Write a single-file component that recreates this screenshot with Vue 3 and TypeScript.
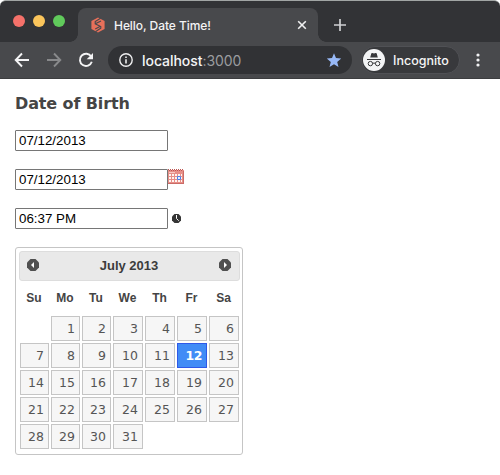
<script setup lang="ts">
interface Day {
  key: number
  label: number | null
}

const weekdays: string[] = ['Su', 'Mo', 'Tu', 'We', 'Th', 'Fr', 'Sa']
const selected = 12
const firstWeekday = 1
const daysInMonth = 31

const days: Day[] = Array.from({ length: firstWeekday + daysInMonth }, (_, i) => ({
  key: i,
  label: i < firstWeekday ? null : i - firstWeekday + 1,
}))
</script>

<template>
  <div class="window">
    <header class="chrome">
      <div class="tabstrip">
        <div class="lights">
          <span class="light red"></span>
          <span class="light yellow"></span>
          <span class="light green"></span>
        </div>
        <div class="tab">
          <svg class="favicon" width="14" height="16" viewBox="0 0 14 16">
            <path d="M7 .4 13.6 4v8L7 15.6.4 12V4z" fill="#e8705a" />
            <path d="M9.6 1.2 4.2 4.6v2.2l5.6 2.7v1.7L4.4 14.8M4.8 6.6 10 3.9M4.2 12 9.4 9.2" fill="none" stroke="#48494c" stroke-width="1.1" />
          </svg>
          <span class="title">Hello, Date Time!</span>
          <svg class="close" width="10" height="10" viewBox="0 0 10 10">
            <path d="M1.2 1.2l7.6 7.6M8.8 1.2 1.2 8.8" stroke="#f1f1f2" stroke-width="1.6" />
          </svg>
        </div>
        <svg class="plus" width="12" height="12" viewBox="0 0 12 12">
          <path d="M6 0v12M0 6h12" stroke="#d0d1d3" stroke-width="1.7" />
        </svg>
      </div>
      <div class="toolbar">
        <svg class="back" width="16" height="16" viewBox="0 0 16 16">
          <path d="M15 8H2M8 1.5 1.7 8 8 14.5" fill="none" stroke="#f4f4f5" stroke-width="1.9" />
        </svg>
        <svg class="forward" width="16" height="16" viewBox="0 0 16 16">
          <path d="M1 8h13M8 1.5 14.3 8 8 14.5" fill="none" stroke="#88898b" stroke-width="1.9" />
        </svg>
        <svg class="reload" width="16" height="16" viewBox="0 0 16 16">
          <path d="M13.2 4.6A6.1 6.1 0 1 0 13.8 9.8" fill="none" stroke="#f4f4f5" stroke-width="1.9" />
          <path d="M15 1v6.3H8.7z" fill="#f4f4f5" />
        </svg>
        <div class="address">
          <svg width="14" height="14" viewBox="0 0 14 14">
            <circle cx="7" cy="7" r="6.2" fill="none" stroke="#eeeeef" stroke-width="1.4" />
            <path d="M7 6.2v4.2M7 3.4V5" stroke="#eeeeef" stroke-width="1.6" />
          </svg>
          <span class="url">localhost<span class="port">:3000</span></span>
          <svg class="star" width="16" height="15" viewBox="0 0 16 15">
            <path d="m8 .3 2 4.8 5.2.4-4 3.4 1.3 5.1L8 11.3l-4.5 2.7 1.3-5.1-4-3.4L6 5.1z" fill="#98b9f7" />
          </svg>
        </div>
        <div class="incognito">
          <svg width="22" height="22" viewBox="0 0 22 22">
            <circle cx="11" cy="11" r="11" fill="#f3f4f5" />
            <path d="m7.2 8.4 1-3.7c.1-.5.6-.8 1.2-.6l1.6.4 1.6-.4c.6-.2 1.1.1 1.2.6l1 3.7z" fill="#37383b" />
            <path d="M4 10.5h14" stroke="#37383b" stroke-width="1.1" />
            <g fill="none" stroke="#37383b" stroke-width="1">
              <circle cx="7.4" cy="14.6" r="2.2" />
              <circle cx="14.6" cy="14.6" r="2.2" />
              <path d="M9.6 14.4q1.4-.8 2.8 0" />
            </g>
          </svg>
          <span>Incognito</span>
        </div>
        <svg class="menu" width="4" height="14" viewBox="0 0 4 14" fill="#f1f1f2">
          <circle cx="2" cy="2" r="1.6" />
          <circle cx="2" cy="7" r="1.6" />
          <circle cx="2" cy="12" r="1.6" />
        </svg>
      </div>
    </header>

    <main class="page">
      <h1>Date of Birth</h1>
      <div class="field"><input type="text" value="07/12/2013" /></div>
      <div class="field">
        <input type="text" value="07/12/2013" />
        <svg width="16" height="16" viewBox="0 0 16 16">
          <path d="M0 1h16v14H0z" fill="#e78f88" />
          <path d="M0 14h16v1H0zM15 2h1v13h-1z" fill="#cb6b66" />
          <path d="M0 0h1v1H0zM2 0h1v1H2zM4 0h1v1H4zM6 0h1v1H6zM8 0h1v1H8zM10 0h1v1h-1zM12 0h1v1h-1zM14 0h1v1h-1zM1 1h1v1H1zM3 1h1v1H3zM5 1h1v1H5zM7 1h1v1H7zM9 1h1v1H9zM11 1h1v1h-1zM13 1h1v1h-1z" fill="#bd5753" />
          <path d="M1 3h6v1H1z" fill="#f8c9c2" />
          <path d="M1 5h2v2H1zM4 5h2v2H4zM7 5h2v2H7zM10 5h2v2h-2zM13 5h1v2h-1zM1 8h2v2H1zM4 8h2v2H4zM7 8h2v2H7zM13 8h1v2h-1zM1 11h2v2H1zM4 11h2v2H4zM7 11h2v2H7zM10 11h2v2h-2zM13 11h1v2h-1z" fill="#fff4f1" />
          <path d="M9.5 7.5h3v3h-3z" fill="#e8efff" stroke="#4c80e6" />
        </svg>
      </div>
      <div class="field">
        <input type="text" value="06:37 PM" />
        <svg class="clock" width="9" height="9" viewBox="0 0 9 9">
          <path d="M2.5 0h4L9 2.5v4L6.5 9h-4L0 6.5v-4z" fill="#353535" />
          <path d="M4.5 1v3.5L6.7 6.7" fill="none" stroke="#fff" />
        </svg>
      </div>

      <section class="calendar">
        <div class="cal-head">
          <svg width="12" height="12" viewBox="0 0 12 12">
            <path d="M3.5 0h5L12 3.5v5L8.5 12h-5L0 8.5v-5z" fill="#505050" />
            <path d="M7 3v6L4 6z" fill="#fff" />
          </svg>
          <span>July 2013</span>
          <svg width="12" height="12" viewBox="0 0 12 12">
            <path d="M3.5 0h5L12 3.5v5L8.5 12h-5L0 8.5v-5z" fill="#505050" />
            <path d="M5 3v6l3-3z" fill="#fff" />
          </svg>
        </div>
        <div class="grid weekdays">
          <span v-for="name in weekdays" :key="name">{{ name }}</span>
        </div>
        <div class="grid days">
          <span
            v-for="day in days"
            :key="day.key"
            :class="{ day: day.label !== null, active: day.label === selected }"
          >{{ day.label }}</span>
        </div>
      </section>
    </main>
  </div>
</template>

<style>
body {
  background: #fff;
}
</style>

<style scoped>
.window {
  width: 500px;
  height: 475px;
  overflow: hidden;
  box-sizing: border-box;
}
svg {
  display: block;
  flex: none;
}
.chrome {
  height: 79px;
  box-sizing: border-box;
  background: #323336;
  border-top: 1px solid #a1a5a4;
  border-radius: 6px 6px 0 0;
  overflow: hidden;
  font-family: Inter, "Liberation Sans", sans-serif;
  color: #f4f4f5;
}
.tabstrip {
  height: 41px;
  display: flex;
  align-items: flex-start;
}
.lights {
  display: flex;
  gap: 8px;
  padding: 14px 0 0 13px;
  width: 78px;
  flex: none;
  box-sizing: border-box;
}
.light {
  width: 12px;
  height: 12px;
  border-radius: 50%;
  flex: none;
}
.red { background: #f5716a; }
.yellow { background: #fbc55b; }
.green { background: #60ca5b; }
.tab {
  position: relative;
  width: 240px;
  height: 34px;
  margin-top: 7px;
  box-sizing: border-box;
  padding: 0 11px 0 13px;
  display: flex;
  align-items: center;
  background: #48494c;
  border-radius: 8px 8px 0 0;
}
.tab::before,
.tab::after {
  content: "";
  position: absolute;
  bottom: 0;
  width: 8px;
  height: 8px;
}
.tab::before {
  left: -8px;
  background: radial-gradient(circle at 0 0, transparent 7.5px, #48494c 8px);
}
.tab::after {
  right: -8px;
  background: radial-gradient(circle at 100% 0, transparent 7.5px, #48494c 8px);
}
.title {
  margin-left: 9px;
  font-size: 12px;
  font-weight: 500;
  letter-spacing: -0.06px;
  white-space: nowrap;
}
.close {
  margin-left: auto;
}
.plus {
  margin: 18px 0 0 16px;
}
.toolbar {
  height: 37px;
  box-sizing: border-box;
  background: #48494c;
  border-bottom: 1px solid #3c3d3f;
  display: flex;
  align-items: center;
  padding-left: 14px;
}
.forward { margin-left: 16px; }
.reload { margin-left: 16px; }
.address {
  width: 244px;
  height: 28px;
  margin-left: 14px;
  box-sizing: border-box;
  padding: 0 10px 0 11px;
  border-radius: 14px;
  background: #313235;
  display: flex;
  align-items: center;
}
.url {
  margin-left: 9px;
  font-size: 14px;
  font-weight: 500;
  letter-spacing: -0.05px;
}
.port {
  color: #9b9c9f;
  font-weight: 400;
}
.star { margin-left: auto; }
.incognito {
  width: 99px;
  height: 28px;
  margin-left: 9px;
  box-sizing: border-box;
  border: 1px solid #505155;
  border-radius: 14px;
  background: #38393c;
  display: flex;
  align-items: center;
  padding-left: 1px;
  gap: 8px;
  font-size: 12.5px;
  font-weight: 500;
}
.menu { margin-left: 16px; }
.page {
  padding: 15px 15px 0;
  font-family: Verdana, "DejaVu Sans", sans-serif;
  color: #454545;
}
h1 {
  margin: 0 0 16px;
  font-size: 16px;
  letter-spacing: -0.12px;
  line-height: 20px;
  font-weight: 700;
}
.field {
  display: flex;
  align-items: flex-start;
  height: 21px;
  margin-bottom: 18px;
}
.field input {
  width: 153px;
  height: 21px;
  box-sizing: border-box;
  margin: 0;
  padding: 1px 3px;
  border: 1px solid #767676;
  border-radius: 1px;
  background: #fff;
  color: #000;
  font-family: "Liberation Sans", Arial, sans-serif;
  font-size: 13.33px;
}
.clock {
  margin: 6px 0 0 4px;
}
.calendar {
  width: 228px;
  height: 208px;
  box-sizing: border-box;
  border: 1px solid #c5c5c5;
  border-radius: 3px;
  padding: 3px 2px 3px 3px;
}
.cal-head {
  height: 30px;
  box-sizing: border-box;
  border: 1px solid #ddd;
  border-radius: 3px;
  background: #e9e9e9;
  display: flex;
  justify-content: space-between;
  align-items: center;
  padding: 0 8px 2px 7px;
  color: #3c3c3c;
  font: 700 13px "Liberation Sans", Arial, sans-serif;
}
.grid {
  display: grid;
  grid-template-columns: repeat(3, 29px) repeat(4, 30px);
  column-gap: 2px;
  padding-left: 1px;
}
.weekdays {
  height: 35px;
  line-height: 35px;
  text-align: center;
  color: #444;
  font-family: "Liberation Sans", Arial, sans-serif;
  font-size: 12px;
  font-weight: 700;
}
.weekdays span {
  margin-left: -1px;
}
.days {
  grid-auto-rows: 25px;
  row-gap: 2px;
}
.day {
  box-sizing: border-box;
  border: 1px solid #c5c5c5;
  background: #f6f6f6;
  color: #555;
  text-align: right;
  padding-right: 4px;
  font-size: 12.5px;
  line-height: 23px;
}
.active {
  background: #418cf6;
  border-color: #2f59e8;
  color: #fff;
  font-weight: 700;
  letter-spacing: -0.5px;
}
</style>
